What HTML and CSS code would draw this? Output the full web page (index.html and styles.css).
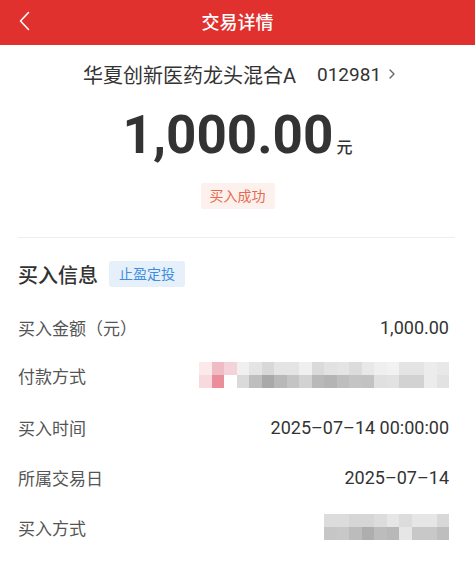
FILE: index.html
```html
<!DOCTYPE html>
<html lang="zh-CN">
<head>
    <meta charset="UTF-8">
    <meta name="viewport" content="width=device-width, initial-scale=1.0">
    <title>交易详情</title>
    <link rel="stylesheet" href="styles.css">
</head>
<body>

<div class="topbar">
    <svg class="back" width="12" height="20" viewBox="0 0 12 20">
        <polyline points="9.5,1.5 1.5,10 9.5,18.5" fill="none" stroke="#fff" stroke-width="1.6" stroke-linecap="round" stroke-linejoin="round"/>
    </svg>
    <h1>交易详情</h1>
</div>

<div class="summary">
    <div class="fund">
        <span class="fund-name">华夏创新医药龙头混合A</span>
        <span class="fund-code">012981</span>
        <svg class="arrow" width="8" height="14" viewBox="0 0 8 14">
            <polyline points="2,3 6,7 2,11" fill="none" stroke="#666" stroke-width="1.4" stroke-linecap="round" stroke-linejoin="round"/>
        </svg>
    </div>
    <div class="amount">1,000.00<span class="unit">元</span></div>
    <span class="status">买入成功</span>
</div>

<div class="section">
    <div class="divider"></div>

    <div class="section-title">
        <h2>买入信息</h2>
        <span class="tag">止盈定投</span>
    </div>

    <div class="row">
        <span class="label">买入金额（元）</span>
        <span class="value">1,000.00</span>
    </div>

    <div class="row row-pay">
        <span class="label">付款方式</span>
        <div class="mosaic mosaic-pay">
            <i style="background:#fbe9ec"></i><i style="background:#efbcc6"></i><i style="background:#f3d3d8"></i><i style="background:#f0f0f0"></i><i style="background:#e4e4e4"></i><i style="background:#d8d8d8"></i><i style="background:#e4e4e4"></i><i style="background:#e4e4e4"></i><i style="background:#efefef"></i><i style="background:#dadada"></i><i style="background:#e2e2e2"></i><i style="background:#e4e4e4"></i><i style="background:#dcdcdc"></i><i style="background:#e8e8e8"></i><i style="background:#efefef"></i><i style="background:#f2f2f2"></i><i style="background:#e4e4e4"></i><i style="background:#e4e4e4"></i><i style="background:#ececec"></i><i style="background:#e8e8e8"></i>
            <i style="background:#f8d9de"></i><i style="background:#e98e9a"></i><i style="background:#fefefe"></i><i style="background:#dadada"></i><i style="background:#bebebe"></i><i style="background:#a9a9a9"></i><i style="background:#b8b8b8"></i><i style="background:#c4c4c4"></i><i style="background:#d2d2d2"></i><i style="background:#b9b9b9"></i><i style="background:#b4b4b4"></i><i style="background:#bebebe"></i><i style="background:#c4c4c4"></i><i style="background:#c2c2c2"></i><i style="background:#e0e0e0"></i><i style="background:#e2e2e2"></i><i style="background:#d2d2d2"></i><i style="background:#d2d2d2"></i><i style="background:#ececec"></i><i style="background:#e2e2e2"></i>
        </div>
    </div>

    <div class="row">
        <span class="label">买入时间</span>
        <span class="value">2025–07–14 00:00:00</span>
    </div>

    <div class="row">
        <span class="label">所属交易日</span>
        <span class="value">2025–07–14</span>
    </div>

    <div class="row">
        <span class="label">买入方式</span>
        <div class="mosaic mosaic-way">
            <i style="background:#dcdcdc"></i><i style="background:#dcdcdc"></i><i style="background:#d6d6d6"></i><i style="background:#d6d6d6"></i><i style="background:#dcdcdc"></i><i style="background:#e6e6e6"></i><i style="background:#dcdcdc"></i><i style="background:#e6e6e6"></i><i style="background:#e6e6e6"></i><i style="background:#d8d8d8"></i>
            <i style="background:#c6c6c6"></i><i style="background:#c8c8c8"></i><i style="background:#bcbcbc"></i><i style="background:#aeaeae"></i><i style="background:#bcbcbc"></i><i style="background:#b8b8b8"></i><i style="background:#e6e6e6"></i><i style="background:#c8c8c8"></i><i style="background:#c8c8c8"></i><i style="background:#bebebe"></i>
        </div>
    </div>
</div>

</body>
</html>
```

FILE: styles.css
```css
body {
    font-family: Roboto, "Noto Sans CJK SC", sans-serif;
    margin: 0;
    padding: 0;
    background-color: #fff;
    color: #333;
}

.topbar {
    position: relative;
    height: 45px;
    background-color: #e0312e;
    display: flex;
    align-items: center;
    justify-content: center;
}

.topbar h1 {
    margin: 0;
    font-size: 18px;
    font-weight: 500;
    color: #fff;
    line-height: 45px;
}

.back {
    position: absolute;
    left: 19px;
    top: 11px;
}

.summary {
    display: flex;
    flex-direction: column;
    align-items: center;
    padding-top: 15px;
}

.fund {
    display: flex;
    align-items: center;
    height: 28px;
    padding-left: 4px;
}

.fund-name {
    font-size: 20px;
    color: #333;
}

.fund-code {
    font-size: 19px;
    color: #333;
    margin-left: 21px;
}

.arrow {
    margin-left: 7px;
}

.amount {
    font-size: 53px;
    font-weight: 700;
    line-height: 60px;
    height: 60px;
    margin-top: 17px;
    color: #333;
}

.unit {
    font-size: 16px;
    font-weight: 500;
    margin-left: 3px;
}

.status {
    margin-top: 18px;
    height: 26px;
    line-height: 26px;
    padding: 0 9px;
    font-size: 14px;
    color: #e8694f;
    background-color: #fdf1ee;
    border-radius: 2px;
}

.section {
    padding: 0 20px 0 18px;
}

.divider {
    height: 1px;
    background-color: #eeeeee;
    margin-top: 28px;
}

.section-title {
    display: flex;
    align-items: center;
    height: 26px;
    margin-top: 23px;
    margin-bottom: 15px;
}

.section-title h2 {
    margin: 0;
    font-size: 20px;
    font-weight: 500;
    color: #333;
}

.tag {
    margin-left: 11px;
    height: 26px;
    line-height: 26px;
    padding: 0 10px;
    font-size: 14px;
    color: #3d8ee0;
    background-color: #e6f0fb;
    border-radius: 3px;
}

.row {
    display: flex;
    align-items: center;
    justify-content: space-between;
    height: 50px;
    padding-right: 6px;
}

.row-pay {
    height: 46px;
    padding-bottom: 4px;
}

.label {
    font-size: 17px;
    color: #555;
}

.value {
    font-size: 18px;
    color: #333;
}

.mosaic {
    display: grid;
    grid-template-rows: 13px 13px;
}

.mosaic i {
    display: block;
}

.mosaic-pay {
    grid-template-columns: repeat(20, 12.5px);
}

.mosaic-way {
    grid-template-columns: repeat(10, 12.5px);
}
```
